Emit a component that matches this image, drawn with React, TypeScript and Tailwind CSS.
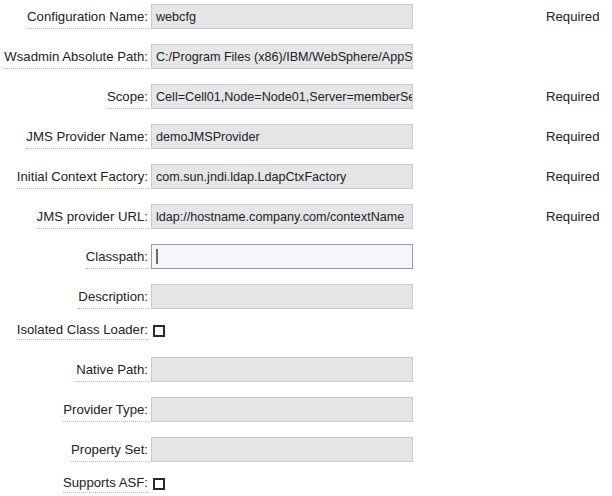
const FIELDS: Array<{ label: string; value?: string; required?: boolean; kind?: 'text' | 'check' | 'focus' }> = [
  { label: 'Configuration Name:', value: 'webcfg', required: true },
  { label: 'Wsadmin Absolute Path:', value: 'C:/Program Files (x86)/IBM/WebSphere/AppServer/bin/wsadmin.bat' },
  { label: 'Scope:', value: 'Cell=Cell01,Node=Node01,Server=memberServer', required: true },
  { label: 'JMS Provider Name:', value: 'demoJMSProvider', required: true },
  { label: 'Initial Context Factory:', value: 'com.sun.jndi.ldap.LdapCtxFactory', required: true },
  { label: 'JMS provider URL:', value: 'ldap://hostname.company.com/contextName', required: true },
  { label: 'Classpath:', kind: 'focus' },
  { label: 'Description:' },
  { label: 'Isolated Class Loader:', kind: 'check' },
  { label: 'Native Path:' },
  { label: 'Provider Type:' },
  { label: 'Property Set:' },
  { label: 'Supports ASF:', kind: 'check' },
]

export default function App() {
  return (
    <div className="w-[612px] h-[496px] overflow-hidden bg-white pt-[4px] font-['Liberation_Sans',Arial,sans-serif] text-[13.2px] text-[#222]">
      {FIELDS.map((f, i) => {
        const prev = FIELDS[i - 1]
        if (f.kind === 'check') {
          return (
            <div key={f.label} className="flex items-end mt-[13px]">
              <div className="w-[148px] flex justify-end">
                <span className="leading-[16px] pb-[1px] border-b border-dotted border-[#b8b8b8] whitespace-nowrap">{f.label}</span>
              </div>
              <div className="ml-[5px] mb-[3px] w-[12px] h-[12px] border-2 border-[#2a2a2a] bg-white" />
            </div>
          )
        }
        const mt = i === 0 ? '' : prev?.kind === 'check' ? 'mt-[17px]' : 'mt-[15px]'
        return (
          <div key={f.label} className={`flex items-end h-[25px] ${mt}`}>
            <div className="w-[148px] flex justify-end">
              <span className="leading-[16px] pb-[3px] border-b border-dotted border-[#b8b8b8] whitespace-nowrap">{f.label}</span>
            </div>
            {f.kind === 'focus' ? (
              <div className="ml-[3px] w-[262px] h-[25px] flex items-center pl-[4px] bg-[#f5f6f9] border border-[#9699b0]">
                <div className="w-[2px] h-[15px] bg-[#6b6b6b]" />
              </div>
            ) : (
              <div className="ml-[3px] w-[262px] h-[25px] flex items-center pl-[4px] bg-[#e6e6e8] border border-[#c8cad6] overflow-hidden whitespace-nowrap leading-[16px] text-[12.6px]">
                {f.value}
              </div>
            )}
            {f.required && (
              <div className="self-center ml-[133px] leading-[16px]">Required</div>
            )}
          </div>
        )
      })}
    </div>
  )
}
